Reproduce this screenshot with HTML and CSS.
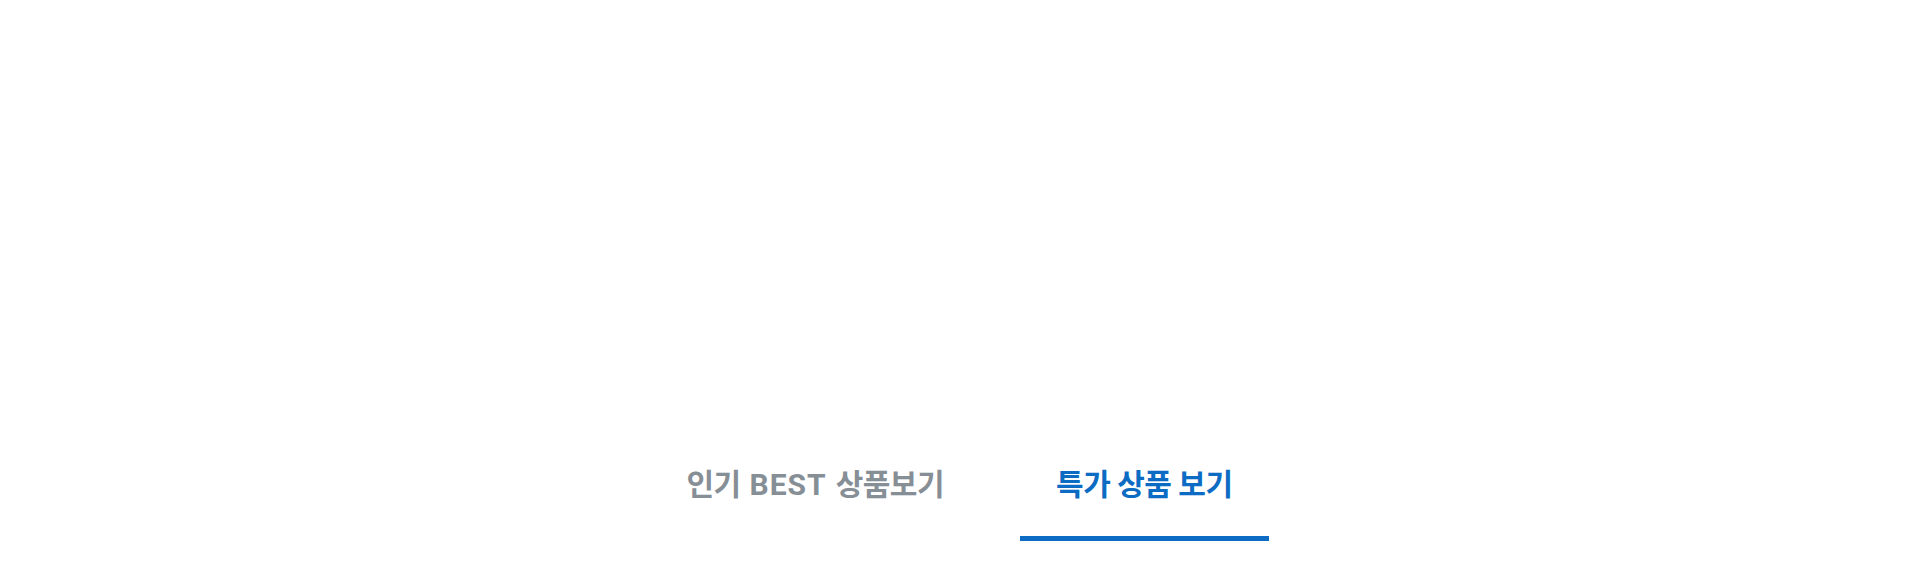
FILE: index.html
```html
<!DOCTYPE html>
<html lang="ko">
<head>
<meta charset="utf-8">
<title>상품 탭</title>
<link rel="stylesheet" href="styles.css">
</head>
<body>
<main class="page">
  <nav class="tabs">
    <a class="tab" href="#">인기 <span class="tab__latin">BEST</span> 상품보기</a>
    <a class="tab tab--active" href="#">특가 상품 보기</a>
  </nav>
</main>
</body>
</html>
```

FILE: styles.css
```css
html, body {
  margin: 0;
  padding: 0;
  background: #ffffff;
}

.page {
  height: 572px;
  padding-top: 464px;
  box-sizing: border-box;
  font-family: Roboto, "Noto Sans CJK KR", sans-serif;
}

.tabs {
  display: flex;
  justify-content: center;
  gap: 40px;
}

.tab {
  display: block;
  padding: 0 36px 30px;
  font-size: 30px;
  line-height: 42px;
  font-weight: 700;
  color: #868e96;
  text-decoration: none;
  letter-spacing: -0.5px;
  word-spacing: 2px;
  border-bottom: 5px solid transparent;
}

.tab__latin {
  letter-spacing: 1px;
}

.tab--active {
  color: #0c6bc3;
  word-spacing: 0;
  border-bottom-color: #0c6bc3;
}
```
